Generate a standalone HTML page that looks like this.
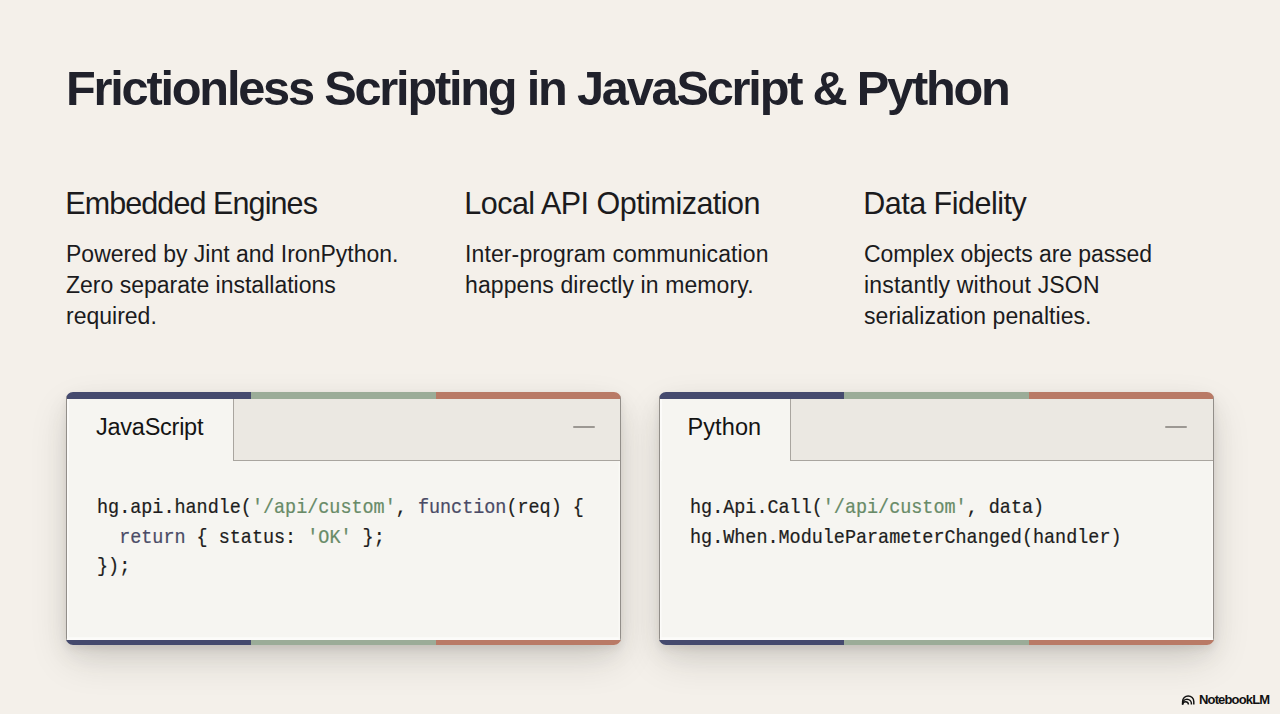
<!DOCTYPE html>
<html>
<head>
<meta charset="utf-8">
<style>
html,body{margin:0;padding:0;}
body{width:1280px;height:714px;overflow:hidden;background:#f4f0ea;font-family:"Liberation Sans",sans-serif;position:relative;color:#1b1b1d;}
.abs{position:absolute;white-space:nowrap;}
#title{left:66px;top:60px;font-size:48.7px;font-weight:bold;color:#20212b;line-height:56px;letter-spacing:-2.2px;}
.h{font-size:30.5px;line-height:36px;top:185px;letter-spacing:-0.5px;margin-left:-0.8px;}
.p{font-size:23px;line-height:31.2px;top:238.8px;}
.card{position:absolute;top:392px;width:555px;height:253px;border-radius:7px;overflow:hidden;background:#f6f5f1;
 box-shadow:0 16px 40px -4px rgba(40,38,34,0.16),0 4px 8px -1px rgba(40,38,34,0.09),0 10px 24px rgba(40,38,34,0.06);}
.bar{position:absolute;left:0;width:100%;height:6.5px;display:flex;}
.bar i{flex:1;display:block;}
.bar i:nth-child(1){background:#454a6e;}
.bar i:nth-child(2){background:#9bac98;}
.bar i:nth-child(3){background:#b97a66;}
.bar.top{top:0;}
.bar.bot{bottom:0;height:5px;}
.side{position:absolute;top:0;bottom:0;width:1.3px;background:#928e89;}
.hl{position:absolute;left:1.2px;right:1.2px;top:68.7px;bottom:5px;box-shadow:inset 1.6px 0 0 #fcfbf9,inset -1.4px 0 0 #faf9f6,inset 0 -2.8px 0 #fcfbf9;}
.hl2{position:absolute;left:1.2px;width:1.6px;top:6.5px;height:62.2px;background:#fcfbf9;}
.hdr{position:absolute;top:6.5px;right:0;height:61px;background:#ebe8e2;border-left:1.2px solid #a9a59f;border-bottom:1.2px solid #a9a59f;}
.min{position:absolute;top:34.2px;width:22px;height:1.6px;background:#9c9893;border-radius:1px;}
.tab{position:absolute;font-size:23.5px;line-height:28px;top:21px;color:#141414;}
.code{position:absolute;font-family:"Liberation Mono",monospace;font-size:18.45px;line-height:27.05px;top:100.9px;color:#1d1d20;white-space:pre;-webkit-text-stroke:0.2px currentColor;transform:scaleY(1.1);transform-origin:0 0;}
.s{color:#688b67;}
.k{color:#4a4b66;}
#logo{left:1199px;top:692.4px;font-size:13px;line-height:15px;font-weight:bold;color:#111;letter-spacing:-0.85px;}
#logoicon{position:absolute;left:1181px;top:694px;width:15px;height:12px;}
</style>
</head>
<body>
<div id="title" class="abs">Frictionless Scripting in JavaScript &amp; Python</div>

<div class="abs h" style="left:66px;letter-spacing:-0.9px">Embedded Engines</div>
<div class="abs h" style="left:465px">Local API Optimization</div>
<div class="abs h" style="left:864px">Data Fidelity</div>

<div class="abs p" style="left:66px">Powered by Jint and IronPython.<br>Zero separate installations<br>required.</div>
<div class="abs p" style="left:465px"><span style="letter-spacing:0.12px">Inter-program communication</span><br><span style="letter-spacing:0.1px">happens directly in memory.</span></div>
<div class="abs p" style="left:864px"><span style="letter-spacing:-0.09px">Complex objects are passed</span><br><span style="letter-spacing:0.2px">instantly without JSON</span><br><span style="letter-spacing:0.05px">serialization penalties.</span></div>

<div class="card" style="left:66px">
  <div class="bar top"><i></i><i></i><i></i></div>
  <div class="hdr" style="left:167px"></div>
  <div class="side" style="left:0"></div>
  <div class="side" style="right:0"></div>
  <div class="min" style="left:507px"></div>
  <div class="tab" style="left:30px;letter-spacing:-0.25px">JavaScript</div>
  <div class="code" style="left:31px">hg.api.handle(<span class="s">'/api/custom'</span>, <span class="k">function</span>(req) {
  <span class="k">return</span> { status: <span class="s">'OK'</span> };
});</div>
  <div class="hl"></div>
  <div class="hl2"></div>
  <div class="bar bot"><i></i><i></i><i></i></div>
</div>

<div class="card" style="left:659px">
  <div class="bar top"><i></i><i></i><i></i></div>
  <div class="hdr" style="left:131px"></div>
  <div class="side" style="left:0"></div>
  <div class="side" style="right:0"></div>
  <div class="min" style="left:506px"></div>
  <div class="tab" style="left:28.5px;letter-spacing:0.1px">Python</div>
  <div class="code" style="left:31px">hg.Api.Call(<span class="s">'/api/custom'</span>, data)
hg.When.ModuleParameterChanged(handler)</div>
  <div class="hl"></div>
  <div class="hl2"></div>
  <div class="bar bot"><i></i><i></i><i></i></div>
</div>

<svg id="logoicon" viewBox="0 0 15 12" fill="none" stroke="#111" stroke-width="1.45"><path d="M1.6,10.6V7.5A5.6,5.6 0 0 1 12.8,7.5V10.6"/><path d="M1.6,10.6V9.6A4.4,4.4 0 0 1 10.4,9.6V10.6"/><path d="M1.6,10.6A2.9,2.9 0 0 1 7.4,10.6"/></svg>
<div id="logo" class="abs">NotebookLM</div>
</body>
</html>
